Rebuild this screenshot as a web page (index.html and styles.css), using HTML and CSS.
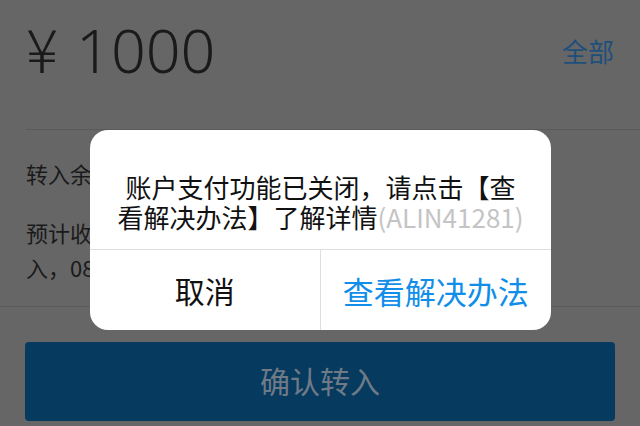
FILE: index.html
```html
<!DOCTYPE html>
<html lang="zh-CN">
<head>
<meta charset="utf-8">
<title>转入</title>
<link rel="stylesheet" href="styles.css">
</head>
<body>
<div class="page">
  <div class="amount-row">
    <div class="amount"><span class="yen">¥</span><span class="num">1000</span></div>
    <a class="all">全部</a>
  </div>
  <div class="info">
    <p class="line">转入余额宝</p>
    <p class="line est">预计收益到账时间：2017年08月03日，15:00 以后转<br>入，08月04日开始计算收益</p>
  </div>
  <div class="actions">
    <button class="confirm">确认转入</button>
  </div>
</div>
<div class="dialog">
  <div class="message">账户支付功能已关闭，请点击【查看解决办法】了解详情<span class="code">(ALIN41281)</span></div>
  <div class="buttons">
    <button class="btn cancel">取消</button>
    <button class="btn solve">查看解决办法</button>
  </div>
</div>
</body>
</html>
```

FILE: styles.css
```css
html, body {
  margin: 0;
  padding: 0;
}
body {
  width: 640px;
  height: 426px;
  overflow: hidden;
  background: #666666;
  font-family: "Noto Sans CJK SC", "Noto Sans", sans-serif;
  color: #1a1a1a;
  position: relative;
}
.page {
  display: flex;
  flex-direction: column;
}
.amount-row {
  height: 130px;
  box-sizing: border-box;
  margin-left: 26px;
  padding: 0 26px 32px 0;
  display: flex;
  align-items: center;
  justify-content: space-between;
  border-bottom: 1px solid #5a5a5a;
}
.amount {
  font-size: 60px;
  line-height: 1;
  font-weight: 300;
  color: #1a1a1a;
  display: flex;
  align-items: baseline;
}
.amount .yen {
  margin-right: 18px;
}
.amount .num {
  font-family: "Noto Sans", sans-serif;
  font-weight: 300;
  font-size: 61px;
}
.all {
  font-size: 26px;
  line-height: 1;
  color: #1e4f7b;
  margin-top: 4px;
}
.info {
  padding: 26px 26px 21px;
  border-bottom: 1px solid #5a5a5a;
}
.line {
  margin: 0;
  font-size: 22px;
  line-height: 35px;
  color: #1a1a1a;
}
.est {
  margin-top: 24px;
}
.actions {
  padding: 35px 25px 0 25px;
}
.confirm {
  display: block;
  width: 100%;
  height: 79px;
  border: none;
  border-radius: 4px;
  background: #073a5f;
  color: #6e7b87;
  font-family: inherit;
  font-size: 30px;
  padding: 0 0 3px;
}
.dialog {
  position: absolute;
  left: 90px;
  top: 130px;
  width: 461px;
  height: 200px;
  background: #ffffff;
  border-radius: 18px;
  display: flex;
  flex-direction: column;
  overflow: hidden;
}
.message {
  height: 120px;
  box-sizing: border-box;
  padding: 42px 25px 18px;
  text-align: center;
  font-size: 26px;
  line-height: 30px;
  color: #111111;
  border-bottom: 1px solid #dedede;
}
.code {
  color: #c4c4c4;
}
.buttons {
  flex: 1;
  display: grid;
  grid-template-columns: 1fr 1fr;
}
.btn {
  border: none;
  background: transparent;
  font-family: inherit;
  font-size: 30px;
  padding: 0;
}
.cancel {
  color: #111111;
  border-right: 1px solid #dedede;
}
.solve {
  color: #108ee9;
  font-size: 31px;
}
```
